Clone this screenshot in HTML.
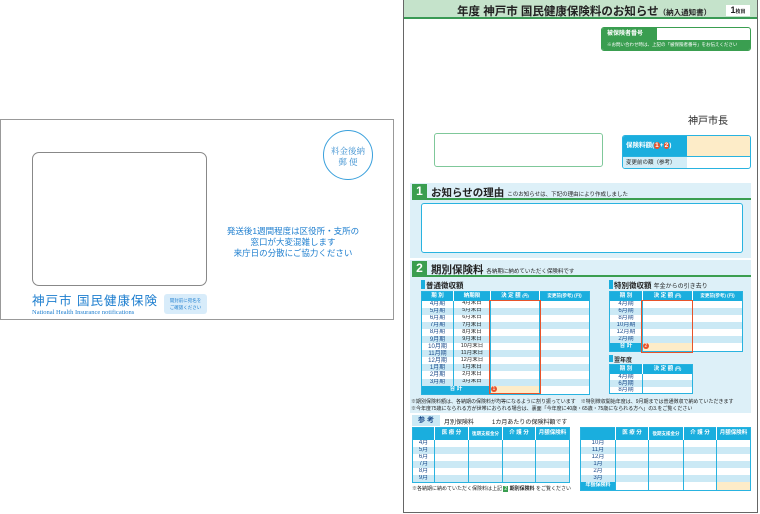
<!DOCTYPE html>
<html><head><meta charset="utf-8"><style>
*{margin:0;padding:0;box-sizing:border-box}
body{width:760px;height:514px;background:#fff;position:relative;overflow:hidden;font-family:"Liberation Sans","Noto Sans CJK JP",sans-serif;color:#222}
.a{position:absolute}
table{border-collapse:collapse;position:absolute;table-layout:fixed;background:#fff}
td{border-left:1px solid #29b3e0;padding:0;font-size:5.5px;text-align:center;line-height:1;overflow:hidden;white-space:nowrap}
td:first-child{border-left:none}
tr.h td{background:#1aaede;color:#fff;font-weight:bold;border-left:1px solid #fff}
tr.h td:first-child{border-left:none}
tr.b td{background:#cbe9f5}
tr.t td{background:#fff}
.bl{color:#1a4a8a;font-size:6px}
</style></head><body>

<!-- envelope -->
<div class="a" style="left:0;top:119px;width:394px;height:201px;border:1px solid #999"></div>
<div class="a" style="left:32px;top:152px;width:175px;height:134px;border:1px solid #888;border-radius:7px"></div>
<div class="a" style="left:323px;top:130px;width:50px;height:50px;border:1px solid #3aa0dc;border-radius:50%"></div>
<div class="a" style="left:323px;top:146px;width:50px;text-align:center;font-size:8.5px;color:#3a8fd0;font-family:'Liberation Serif','Noto Serif CJK SC',serif;line-height:11px">料金後納<br>郵 便</div>
<div class="a" style="left:220px;top:226px;width:146px;text-align:center;font-size:8.5px;line-height:11px;color:#1d7ecf">発送後1週間程度は区役所・支所の<br>窓口が大変混雑します<br>来庁日の分散にご協力ください</div>
<div class="a" style="left:32px;top:290px;font-size:12.5px;color:#1d7ecf;letter-spacing:1px;white-space:nowrap">神戸市 国民健康保険</div>
<div class="a" style="left:32px;top:309px;font-size:6.5px;color:#1d7ecf;white-space:nowrap;font-family:'Liberation Serif',serif">National Health Insurance notifications</div>
<div class="a" style="left:164px;top:294px;width:43px;height:20px;background:#d8ecfa;border-radius:3px;font-size:4.5px;color:#1d7ecf;text-align:center;line-height:7px;padding-top:3px">開封前に宛名を<br>ご確認ください</div>

<!-- document -->
<div class="a" style="left:403px;top:0;width:355px;height:513px;border:1px solid #666;border-top:none"></div>
<div class="a" style="left:404px;top:0;width:353px;height:19px;background:#c5e3cb;border-bottom:2px solid #3a9a55"></div>
<div class="a" style="left:457px;top:3px;font-size:11.5px;font-weight:bold;white-space:nowrap">年度 神戸市 国民健康保険料のお知らせ<span style="font-size:7.5px">（納入通知書）</span></div>
<div class="a" style="left:726px;top:5px;width:24px;height:11px;background:#fff;font-size:9px;font-weight:bold;text-align:center;line-height:11px">1<span style="font-size:5px">枚目</span></div>

<div class="a" style="left:601px;top:27px;width:150px;height:24px;border:1px solid #3a9e50;border-radius:3px;overflow:hidden">
 <div class="a" style="left:0;top:0;width:55px;height:12px;background:#3a9e50;color:#fff;font-size:6px;font-weight:bold;line-height:12px;padding-left:5px">被保険者番号</div>
 <div class="a" style="left:0;top:12px;width:150px;height:12px;background:#3a9e50;color:#fff;font-size:4.5px;line-height:10px;padding-left:5px">※お問い合わせ時は、上記の「被保険者番号」をお伝えください</div>
</div>
<div class="a" style="left:688px;top:112px;font-size:10px">神戸市長</div>
<div class="a" style="left:434px;top:133px;width:169px;height:34px;border:1px solid #7fc89a;border-radius:3px"></div>
<div class="a" style="left:622px;top:135px;width:129px;height:34px;border:1px solid #29b3e0;border-radius:3px;overflow:hidden">
 <div class="a" style="left:0;top:0;width:64px;height:20px;background:#1aaede;color:#fff;font-size:6.5px;font-weight:bold;line-height:20px;padding-left:3px">保険料額(<span style="background:#e8532a;border-radius:50%;padding:0 1px">1</span>+<span style="background:#e8532a;border-radius:50%;padding:0 1px">2</span>)</div>
 <div class="a" style="left:64px;top:0;width:65px;height:20px;background:#fdecc8"></div>
 <div class="a" style="left:0;top:20px;width:64px;height:14px;background:#d3edf7;font-size:5.5px;line-height:13px;padding-left:3px;border-top:1px solid #29b3e0">変更前の額（参考）</div>
 <div class="a" style="left:64px;top:20px;width:65px;height:14px;border-top:1px solid #29b3e0"></div>
</div>

<!-- section 1 -->
<div class="a" style="left:410px;top:183px;width:341px;height:75px;background:#ddf0f8"></div>
<div class="a" style="left:412px;top:184px;width:15px;height:15px;background:#3a9e50;color:#fff;font-weight:bold;font-size:12px;text-align:center;line-height:15px">1</div>
<div class="a" style="left:412px;top:198px;width:339px;height:2px;background:#3a9e50"></div>
<div class="a" style="left:431px;top:185px;font-size:10.5px;font-weight:bold;white-space:nowrap">お知らせの理由 <span style="font-size:5.5px;font-weight:normal">このお知らせは、下記の理由により作成しました</span></div>
<div class="a" style="left:421px;top:203px;width:322px;height:50px;background:#fff;border:1px solid #29b3e0;border-radius:3px"></div>

<!-- section 2 -->
<div class="a" style="left:410px;top:260px;width:341px;height:153px;background:#ddf0f8"></div>
<div class="a" style="left:412px;top:261px;width:15px;height:15px;background:#3a9e50;color:#fff;font-weight:bold;font-size:12px;text-align:center;line-height:15px">2</div>
<div class="a" style="left:412px;top:275px;width:339px;height:2px;background:#3a9e50"></div>
<div class="a" style="left:431px;top:262px;font-size:10.5px;font-weight:bold;white-space:nowrap">期別保険料 <span style="font-size:5.5px;font-weight:normal">各納期に納めていただく保険料です</span></div>

<div class="a" style="left:421px;top:280px;width:4px;height:9px;background:#1aaede"></div>
<div class="a" style="left:426px;top:280px;font-size:7.5px;font-weight:bold">普通徴収額</div>
<table style="left:421px;top:291px;width:169px;border:1px solid #29b3e0">
<colgroup><col style="width:32px"><col style="width:37px"><col style="width:49px"><col></colgroup>
<tr class="h" style="height:9px"><td>期 別</td><td>納期限</td><td>決 定 額 <span style="font-size:4px">(円)</span></td><td style="font-size:4.5px">変更前(参考) (円)</td></tr>
<tr class="t" style="height:7.1px"><td class="bl">4月期</td><td>4月末日</td><td></td><td></td></tr>
<tr class="b" style="height:7.1px"><td class="bl">5月期</td><td>5月末日</td><td></td><td></td></tr>
<tr class="t" style="height:7.1px"><td class="bl">6月期</td><td>6月末日</td><td></td><td></td></tr>
<tr class="b" style="height:7.1px"><td class="bl">7月期</td><td>7月末日</td><td></td><td></td></tr>
<tr class="t" style="height:7.1px"><td class="bl">8月期</td><td>8月末日</td><td></td><td></td></tr>
<tr class="b" style="height:7.1px"><td class="bl">9月期</td><td>9月末日</td><td></td><td></td></tr>
<tr class="t" style="height:7.1px"><td class="bl">10月期</td><td>10月末日</td><td></td><td></td></tr>
<tr class="b" style="height:7.1px"><td class="bl">11月期</td><td>11月末日</td><td></td><td></td></tr>
<tr class="t" style="height:7.1px"><td class="bl">12月期</td><td>12月末日</td><td></td><td></td></tr>
<tr class="b" style="height:7.1px"><td class="bl">1月期</td><td>1月末日</td><td></td><td></td></tr>
<tr class="t" style="height:7.1px"><td class="bl">2月期</td><td>2月末日</td><td></td><td></td></tr>
<tr class="b" style="height:7.1px"><td class="bl">3月期</td><td>3月末日</td><td></td><td></td></tr>
<tr style="height:9px"><td colspan="2" style="background:#1aaede;color:#fff;font-weight:bold">合 計</td><td style="background:#fdecc8;text-align:left"><span style="background:#e8532a;color:#fff;border-radius:50%;padding:0 1.5px;font-size:5px">1</span></td><td></td></tr>
</table>
<div class="a" style="left:489px;top:300px;width:52px;height:94px;border:1.5px solid #e8532a"></div>

<div class="a" style="left:609px;top:280px;width:4px;height:9px;background:#1aaede"></div>
<div class="a" style="left:614px;top:280px;font-size:7.5px;font-weight:bold;white-space:nowrap">特別徴収額 <span style="font-size:6px;font-weight:normal">年金からの引き去り</span></div>
<table style="left:609px;top:291px;width:134px;border:1px solid #29b3e0">
<colgroup><col style="width:33px"><col style="width:50px"><col></colgroup>
<tr class="h" style="height:9px"><td>期 別</td><td>決 定 額 <span style="font-size:4px">(円)</span></td><td style="font-size:4.5px">変更前(参考) (円)</td></tr>
<tr class="t" style="height:7px"><td class="bl">4月期</td><td></td><td></td></tr>
<tr class="b" style="height:7px"><td class="bl">6月期</td><td></td><td></td></tr>
<tr class="t" style="height:7px"><td class="bl">8月期</td><td></td><td></td></tr>
<tr class="b" style="height:7px"><td class="bl">10月期</td><td></td><td></td></tr>
<tr class="t" style="height:7px"><td class="bl">12月期</td><td></td><td></td></tr>
<tr class="b" style="height:7px"><td class="bl">2月期</td><td></td><td></td></tr>
<tr style="height:9px"><td style="background:#1aaede;color:#fff;font-weight:bold">合 計</td><td style="background:#fdecc8;text-align:left"><span style="background:#e8532a;color:#fff;border-radius:50%;padding:0 1.5px;font-size:5px">2</span></td><td></td></tr>
</table>
<div class="a" style="left:641px;top:300px;width:52px;height:53px;border:1.5px solid #e8532a"></div>
<div class="a" style="left:609px;top:355px;width:4px;height:7px;background:#1aaede"></div>
<div class="a" style="left:614px;top:355px;font-size:6px;font-weight:bold">翌年度</div>
<table style="left:609px;top:364px;width:84px;border:1px solid #29b3e0">
<colgroup><col style="width:33px"><col></colgroup>
<tr class="h" style="height:9px"><td>期 別</td><td>決 定 額 <span style="font-size:4px">(円)</span></td></tr>
<tr class="t" style="height:6.7px"><td class="bl">4月期</td><td></td></tr>
<tr class="b" style="height:6.7px"><td class="bl">6月期</td><td></td></tr>
<tr class="t" style="height:6.7px"><td class="bl">8月期</td><td></td></tr>
</table>
<div class="a" style="left:411px;top:399px;font-size:5px;line-height:7px;white-space:nowrap">※期別保険料額は、各納期の保険料が均等になるように割り振っています　※特別徴収開始年度は、9月期までは普通徴収で納めていただきます<br>※今年度75歳になられる方が世帯におられる場合は、裏面「今年度に40歳・65歳・75歳になられる方へ」の3.をご覧ください</div>

<!-- reference -->
<div class="a" style="left:412px;top:415px;width:28px;height:11px;background:#cbe9f5;font-size:7px;font-weight:bold;text-align:center;line-height:11px;color:#1a4a8a">参 考</div>
<div class="a" style="left:444px;top:417px;font-size:6px;white-space:nowrap">月別保険料　　　1カ月あたりの保険料額です</div>
<table style="left:412px;top:427px;width:158px;border:1.5px solid #29b3e0">
<colgroup><col style="width:22px"><col style="width:34px"><col style="width:34px"><col style="width:33px"><col></colgroup>
<tr class="h" style="height:12px"><td></td><td>医 療 分</td><td style="font-size:4.5px">後期支援金分</td><td>介 護 分</td><td>月額保険料</td></tr>
<tr class="t" style="height:7.1px"><td class="bl">4月</td><td></td><td></td><td></td><td></td></tr>
<tr class="b" style="height:7.1px"><td class="bl">5月</td><td></td><td></td><td></td><td></td></tr>
<tr class="t" style="height:7.1px"><td class="bl">6月</td><td></td><td></td><td></td><td></td></tr>
<tr class="b" style="height:7.1px"><td class="bl">7月</td><td></td><td></td><td></td><td></td></tr>
<tr class="t" style="height:7.1px"><td class="bl">8月</td><td></td><td></td><td></td><td></td></tr>
<tr class="b" style="height:7.1px"><td class="bl">9月</td><td></td><td></td><td></td><td></td></tr>
</table>
<div class="a" style="left:412px;top:485px;font-size:5px;white-space:nowrap">※各納期に納めていただく保険料は上記 <span style="background:#3a9e50;color:#fff;padding:0 1px">2</span> <b>期別保険料</b> をご覧ください</div>
<table style="left:580px;top:427px;width:171px;border:1.5px solid #29b3e0">
<colgroup><col style="width:35px"><col style="width:33px"><col style="width:35px"><col style="width:33px"><col></colgroup>
<tr class="h" style="height:12px"><td></td><td>医 療 分</td><td style="font-size:4.5px">後期支援金分</td><td>介 護 分</td><td>月額保険料</td></tr>
<tr class="t" style="height:7px"><td class="bl">10月</td><td></td><td></td><td></td><td></td></tr>
<tr class="b" style="height:7px"><td class="bl">11月</td><td></td><td></td><td></td><td></td></tr>
<tr class="t" style="height:7px"><td class="bl">12月</td><td></td><td></td><td></td><td></td></tr>
<tr class="b" style="height:7px"><td class="bl">1月</td><td></td><td></td><td></td><td></td></tr>
<tr class="t" style="height:7px"><td class="bl">2月</td><td></td><td></td><td></td><td></td></tr>
<tr class="b" style="height:7px"><td class="bl">3月</td><td></td><td></td><td></td><td></td></tr>
<tr style="height:9px"><td style="background:#1aaede;color:#fff;font-weight:bold;font-size:5px">年額保険料</td><td></td><td></td><td></td><td style="background:#fdecc8"></td></tr>
</table>
</body></html>
